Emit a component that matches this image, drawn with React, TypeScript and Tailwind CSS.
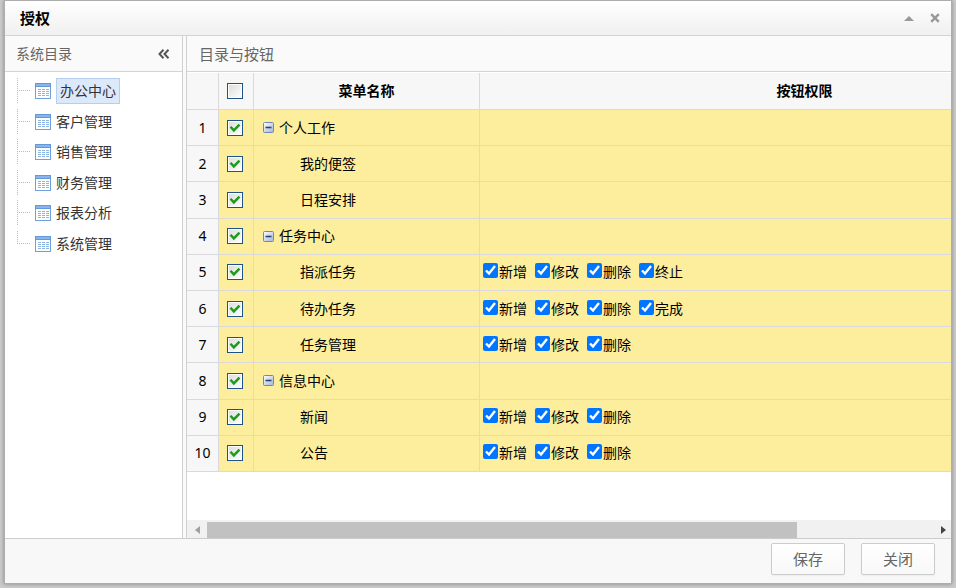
import { useState } from "react";

type Row = { name: string; parent?: boolean; actions?: string[] };

const folders = ["办公中心", "客户管理", "销售管理", "财务管理", "报表分析", "系统管理"];

const rows: Row[] = [
  { name: "个人工作", parent: true },
  { name: "我的便签" },
  { name: "日程安排" },
  { name: "任务中心", parent: true },
  { name: "指派任务", actions: ["新增", "修改", "删除", "终止"] },
  { name: "待办任务", actions: ["新增", "修改", "删除", "完成"] },
  { name: "任务管理", actions: ["新增", "修改", "删除"] },
  { name: "信息中心", parent: true },
  { name: "新闻", actions: ["新增", "修改", "删除"] },
  { name: "公告", actions: ["新增", "修改", "删除"] },
];

function TableIcon() {
  return (
    <svg width="16" height="16" viewBox="0 0 16 16" className="shrink-0" aria-hidden="true">
      <rect x="0.5" y="0.5" width="15" height="15" fill="#ffffff" stroke="#6fa0d8" />
      <rect x="0" y="0" width="16" height="4" fill="#6398da" />
      <rect x="1" y="1" width="14" height="2" fill="#8ab5ea" />
      <path d="M3 6.5h3M7 6.5h3M11 6.5h3M3 8.5h3M7 8.5h3M11 8.5h3M3 10.5h3M7 10.5h3M11 10.5h3M3 12.5h3M7 12.5h3M11 12.5h3" stroke="#8db4e3" />
    </svg>
  );
}

function CollapseIcon() {
  return (
    <svg width="11" height="11" viewBox="0 0 11 11" aria-hidden="true">
      <defs>
        <linearGradient id="fold" x1="0" y1="0" x2="1" y2="1">
          <stop offset="0" stopColor="#ffffff" />
          <stop offset="1" stopColor="#a3b4d4" />
        </linearGradient>
      </defs>
      <rect x="0.5" y="0.5" width="10" height="10" rx="1" fill="url(#fold)" stroke="#7288b4" />
      <path d="M2.5 5.5h6" stroke="#27427c" strokeWidth="1.6" />
    </svg>
  );
}

function RowCheck({ label, checked }: { label: string; checked?: boolean }) {
  return (
    <span className="relative ml-2 block size-4">
      <input
        type="checkbox"
        aria-label={label}
        defaultChecked={checked}
        className="peer block size-4 appearance-none border border-[#1f5288] bg-linear-to-br from-[#dcdcd8] to-white inset-ring inset-ring-white"
      />
      <svg
        width="16"
        height="16"
        viewBox="0 0 16 16"
        className="pointer-events-none absolute inset-0 hidden peer-checked:block"
        aria-hidden="true"
      >
        <path d="M3.5 6.8l3.3 3.6L12.5 4.6" fill="none" stroke="#1c9a1c" strokeWidth="2.4" />
      </svg>
    </span>
  );
}

export default function App() {
  const [active, setActive] = useState(0);

  return (
    <div className="h-screen bg-[#cbcbcb] pr-1 pb-1 pl-1 font-['Noto_Sans','Noto_Sans_CJK_SC',sans-serif] text-sm leading-5 text-black">
      <div className="flex h-full flex-col border border-[#adadad] bg-white shadow-[0_0_4px_#888]">
        <header className="flex h-[35px] shrink-0 items-center border-b border-[#d4d4d4] bg-linear-to-b from-white to-[#f0f0f0] pr-1 pl-[15px]">
          <h1 className="flex-1 text-[15px] font-bold">授权</h1>
          <button type="button" aria-label="折叠" className="flex size-6 items-center justify-center">
            <svg width="10" height="5" viewBox="0 0 10 5">
              <path d="M5 0l5 5H0z" fill="#999" />
            </svg>
          </button>
          <button type="button" aria-label="关闭窗口" className="ml-0.5 flex size-6 items-center justify-center">
            <svg width="10" height="10" viewBox="0 0 10 10">
              <path d="M1.2 1.2l7.6 7.6M8.8 1.2L1.2 8.8" stroke="#999" strokeWidth="2.4" />
            </svg>
          </button>
        </header>

        <div className="flex min-h-0 flex-1">
          <aside className="flex w-[178px] shrink-0 flex-col border-r border-[#d0d0d0]">
            <div className="flex h-9 shrink-0 items-center justify-between border-b border-[#d4d4d4] bg-[#fafafa] pr-3 pl-[11px] text-[#666]">
              <h2>系统目录</h2>
              <button type="button" aria-label="收起" className="flex">
                <svg width="12" height="10" viewBox="0 0 12 10">
                  <path d="M5.5 0.8L1.5 5l4 4.2M10.5 0.8L6.5 5l4 4.2" fill="none" stroke="#555" strokeWidth="2" />
                </svg>
              </button>
            </div>
            <ul className="mt-1 grid h-[183px] grid-rows-6 pl-3">
              {folders.map((folder, i) => (
                <li key={folder} className="flex min-h-0 items-center">
                  <svg width="14" height="26" viewBox="0 0 14 26" className="mr-1 shrink-0" aria-hidden="true">
                    <path
                      d={i === folders.length - 1 ? "M0.5 0v13" : "M0.5 0v26"}
                      stroke="#bbb"
                      strokeDasharray="1 1"
                    />
                    <path d="M2 12.5h12" stroke="#bbb" strokeDasharray="1 1" />
                  </svg>
                  <TableIcon />
                  <button
                    type="button"
                    onClick={() => setActive(i)}
                    className={
                      i === active
                        ? "ml-[5px] h-[26px] border border-[#b4cff0] bg-[#dce9fa] px-[3px] text-[#333]"
                        : "ml-[5px] h-[26px] text-[#333]"
                    }
                  >
                    {folder}
                  </button>
                </li>
              ))}
            </ul>
          </aside>

          <div className="w-[3px] shrink-0 bg-[#fafafa]" />

          <main className="flex min-w-0 flex-1 flex-col border-l border-[#d0d0d0]">
            <div className="flex h-9 shrink-0 items-center border-b border-[#d4d4d4] bg-[#fafafa] pl-3 text-[15px] text-[#666]">
              <h2>目录与按钮</h2>
            </div>
            <div className="min-h-0 flex-1 overflow-hidden pt-px">
              <table className="h-[399px] w-[943px] table-fixed border-separate border-spacing-0">
                <colgroup>
                  <col className="w-8" />
                  <col className="w-[35px]" />
                  <col className="w-[226px]" />
                  <col />
                </colgroup>
                <thead>
                  <tr className="h-[37px] bg-[#f7f7f7] [&>*]:border-r [&>*]:border-b [&>*]:border-[#dadade]">
                    <td />
                    <td>
                      <RowCheck label="全选" />
                    </td>
                    <th scope="col">菜单名称</th>
                    <th scope="col">按钮权限</th>
                  </tr>
                </thead>
                <tbody>
                  {rows.map((row, i) => (
                    <tr key={row.name} className="bg-[#fcee9c] [&>*]:border-r [&>*]:border-b [&>*]:border-[#dadade]">
                      <td className="bg-[#f7f7f7] text-center">{i + 1}</td>
                      <td>
                        <RowCheck label={row.name} checked />
                      </td>
                      <td>
                        {row.parent ? (
                          <span className="flex items-center gap-[5px] pl-[9px]">
                            <button type="button" aria-label={"折叠 " + row.name}>
                              <CollapseIcon />
                            </button>
                            {row.name}
                          </span>
                        ) : (
                          <span className="block pl-[46px]">{row.name}</span>
                        )}
                      </td>
                      <td>
                        <span className="flex gap-2 pl-[3px]">
                          {row.actions?.map((action) => (
                            <label key={action} className="flex items-start gap-px">
                              <input type="checkbox" defaultChecked className="mt-px size-[15px] accent-[#0075ff]" />
                              {action}
                            </label>
                          ))}
                        </span>
                      </td>
                    </tr>
                  ))}
                </tbody>
              </table>
            </div>
            <div className="flex h-[18px] shrink-0 items-end bg-[#f1f1f1]">
              <span className="flex h-4 w-5 items-center justify-center">
                <svg width="5" height="8" viewBox="0 0 5 8">
                  <path d="M5 0v8L0 4z" fill="#a0a0a0" />
                </svg>
              </span>
              <div className="h-4 flex-1">
                <div className="h-4 w-[81%] bg-[#c1c1c1]" />
              </div>
              <span className="flex h-4 w-4 items-center justify-center">
                <svg width="5" height="8" viewBox="0 0 5 8">
                  <path d="M0 0v8l5-4z" fill="#444" />
                </svg>
              </span>
            </div>
          </main>
        </div>

        <footer className="flex h-[45px] shrink-0 items-start justify-end gap-4 border-t border-[#ccc] bg-[#f8f8f8] pt-1 pr-4 text-[15px] text-[#666]">
          <button type="button" className="h-8 w-[74px] rounded-xs border border-[#ccc] bg-linear-to-b from-white to-[#f8f8f8] shadow-xs">
            保存
          </button>
          <button type="button" className="h-8 w-[74px] rounded-xs border border-[#ccc] bg-linear-to-b from-white to-[#f8f8f8] shadow-xs">
            关闭
          </button>
        </footer>
      </div>
    </div>
  );
}
